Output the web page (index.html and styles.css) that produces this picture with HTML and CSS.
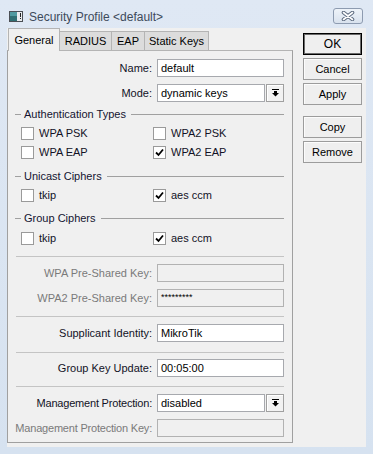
FILE: index.html
```html
<!DOCTYPE html>
<html>
<head>
<meta charset="utf-8">
<link rel="stylesheet" href="styles.css">
</head>
<body>
<div class="window">
  <div class="titlebar">
    <svg class="appicon" width="14" height="11" viewBox="0 0 14 11">
      <rect x="0.5" y="0.5" width="13" height="10" fill="#e9ecef" stroke="#4b4f55"/>
      <rect x="1" y="1" width="7" height="9" fill="#2f6f73"/>
      <rect x="1" y="1" width="7" height="4" fill="#4f9aa0"/>
      <rect x="11" y="2" width="1" height="4" fill="#222"/>
      <rect x="11" y="7" width="1" height="1" fill="#222"/>
    </svg>
    <span class="title">Security Profile &lt;default&gt;</span>
    <div class="close">
      <svg width="14" height="10" viewBox="0 0 14 10">
        <path d="M2.5 1.5 L11.5 8.5 M11.5 1.5 L2.5 8.5" stroke="#5d6b80" stroke-width="3.6" stroke-linecap="round"/>
        <path d="M2.5 1.5 L11.5 8.5 M11.5 1.5 L2.5 8.5" stroke="#ffffff" stroke-width="1.6" stroke-linecap="round"/>
      </svg>
    </div>
  </div>
  <div class="client">
    <div class="left">
      <div class="tabs">
        <div class="tab active w-general">General</div>
        <div class="tab w-radius">RADIUS</div>
        <div class="tab w-eap">EAP</div>
        <div class="tab w-static">Static Keys</div>
      </div>
      <div class="panel">
        <div class="row mt8">
          <div class="label">Name:</div>
          <div class="input">default</div>
        </div>
        <div class="row mt7">
          <div class="label">Mode:</div>
          <div class="input short">dynamic keys</div>
          <div class="ddbtn"><svg width="7" height="8" viewBox="0 0 7 8"><rect x="0" y="0" width="7" height="1" fill="#000"/><rect x="2" y="2" width="3" height="2" fill="#000"/><path d="M0 4 L7 4 L3.5 7.5 Z" fill="#000"/></svg></div>
        </div>

        <div class="group mt6"><span class="dash"></span><span class="gtext">Authentication Types</span><span class="gline"></span></div>
        <div class="checks mt6">
          <div class="chk"><span class="box"></span><span class="ctext">WPA PSK</span></div>
          <div class="chk"><span class="box"></span><span class="ctext">WPA2 PSK</span></div>
        </div>
        <div class="checks mt6">
          <div class="chk"><span class="box"></span><span class="ctext">WPA EAP</span></div>
          <div class="chk"><span class="box"><svg width="11" height="11" viewBox="0 0 11 11"><path d="M2 5.5 L4.5 8 L9 2.5" stroke="#000" stroke-width="1.8" fill="none"/></svg></span><span class="ctext">WPA2 EAP</span></div>
        </div>

        <div class="group mt11"><span class="dash"></span><span class="gtext">Unicast Ciphers</span><span class="gline"></span></div>
        <div class="checks mt6">
          <div class="chk"><span class="box"></span><span class="ctext">tkip</span></div>
          <div class="chk"><span class="box"><svg width="11" height="11" viewBox="0 0 11 11"><path d="M2 5.5 L4.5 8 L9 2.5" stroke="#000" stroke-width="1.8" fill="none"/></svg></span><span class="ctext">aes ccm</span></div>
        </div>

        <div class="group mt10"><span class="dash"></span><span class="gtext">Group Ciphers</span><span class="gline"></span></div>
        <div class="checks mt7">
          <div class="chk"><span class="box"></span><span class="ctext">tkip</span></div>
          <div class="chk"><span class="box"><svg width="11" height="11" viewBox="0 0 11 11"><path d="M2 5.5 L4.5 8 L9 2.5" stroke="#000" stroke-width="1.8" fill="none"/></svg></span><span class="ctext">aes ccm</span></div>
        </div>

        <div class="sep mt11"></div>
        <div class="row mt7">
          <div class="label disabled">WPA Pre-Shared Key:</div>
          <div class="input off"></div>
        </div>
        <div class="row mt7">
          <div class="label disabled">WPA2 Pre-Shared Key:</div>
          <div class="input off"><span class="stars">*********</span></div>
        </div>

        <div class="sep mt9"></div>
        <div class="row mt7">
          <div class="label">Supplicant Identity:</div>
          <div class="input">MikroTik</div>
        </div>

        <div class="sep mt10"></div>
        <div class="row mt6">
          <div class="label">Group Key Update:</div>
          <div class="input">00:05:00</div>
        </div>

        <div class="sep mt9"></div>
        <div class="row mt7">
          <div class="label tight">Management Protection:</div>
          <div class="input short">disabled</div>
          <div class="ddbtn"><svg width="7" height="8" viewBox="0 0 7 8"><rect x="0" y="0" width="7" height="1" fill="#000"/><rect x="2" y="2" width="3" height="2" fill="#000"/><path d="M0 4 L7 4 L3.5 7.5 Z" fill="#000"/></svg></div>
        </div>
        <div class="row mt7">
          <div class="label disabled tight">Management Protection Key:</div>
          <div class="input off"></div>
        </div>
      </div>
    </div>
    <div class="buttons">
      <div class="btn default">OK</div>
      <div class="btn">Cancel</div>
      <div class="btn">Apply</div>
      <div class="btn gap">Copy</div>
      <div class="btn">Remove</div>
    </div>
  </div>
</div>
</body>
</html>
```

FILE: styles.css
```css
* { box-sizing: border-box; }
html, body { margin: 0; padding: 0; }
body {
  font-family: "Liberation Sans", Arial, sans-serif;
  font-size: 11px;
  color: #000;
  background: #d9e4f1;
}
.window {
  width: 373px;
  height: 454px;
  background: linear-gradient(#dfe8f4, #d6e2f0);
  overflow: hidden;
}
.titlebar {
  height: 28px;
  display: flex;
  align-items: flex-start;
  padding-left: 9px;
}
.appicon { margin-top: 11px; flex: none; }
.title {
  margin-left: 6px;
  margin-top: 10px;
  font-size: 12px;
  line-height: 14px;
  color: #3d4a5b;
}
.close {
  margin-left: auto;
  margin-right: 10px;
  margin-top: 8px;
  width: 30px;
  height: 16px;
  border: 1px solid #8d9bb0;
  border-radius: 3px;
  background: linear-gradient(#eef3f9, #d9e2ee);
  display: flex;
  align-items: center;
  justify-content: center;
}
.client {
  margin: 0 7px;
  height: 419px;
  background: #f0f0f0;
  display: flex;
  align-items: flex-start;
}
.left { width: 286px; flex: none; }
.tabs {
  height: 22px;
  display: flex;
  align-items: flex-end;
  padding-left: 1px;
}
.tab {
  height: 19px;
  background: #dcdcdc;
  border-top: 1px solid #b4b4b4;
  border-right: 1px solid #b4b4b4;
  text-align: center;
  line-height: 18px;
  color: #000;
}
.tab.active {
  height: 23px;
  margin-bottom: -1px;
  background: #f0f0f0;
  border-left: 1px solid #b4b4b4;
  position: relative;
  z-index: 1;
  line-height: 22px;
}
.w-general { width: 52px; }
.w-radius { width: 52px; }
.w-eap { width: 33px; }
.w-static { width: 64px; }
.panel {
  height: 393px;
  border: 1px solid #a0a0a0;
  border-top-color: #b4b4b4;
  background: #f0f0f0;
  padding-top: 0;
}
.mt6 { margin-top: 6px; }
.mt7 { margin-top: 7px; }
.mt8 { margin-top: 8px; }
.mt9 { margin-top: 9px; }
.mt10 { margin-top: 10px; }
.mt11 { margin-top: 11px; }
.row {
  display: flex;
  align-items: center;
  height: 18px;
}
.label {
  width: 144px;
  flex: none;
  text-align: right;
  color: #121226;
  white-space: nowrap;
}
.label.tight { letter-spacing: -0.2px; }
.label.disabled { color: #7a7a7a; }
.input {
  margin-left: 5px;
  width: 127px;
  height: 18px;
  border: 1px solid #a7a9ae;
  background: #fff;
  padding-left: 3px;
  line-height: 16px;
  color: #000;
  white-space: nowrap;
  overflow: hidden;
}
.input.short { width: 108px; }
.input.off {
  background: #f0f0f0;
  border-color: #b2b2b2;
}
.stars {
  font-size: 9px;
  line-height: 12px;
  display: block;
  margin-top: 1px;
}
.ddbtn {
  margin-left: 1px;
  width: 18px;
  height: 18px;
  border: 1px solid #a0a0a0;
  background: #f2f2f2;
  box-shadow: inset 1px 1px 0 #fff;
  display: flex;
  align-items: center;
  justify-content: center;
}
.group {
  display: flex;
  align-items: center;
  height: 13px;
  padding-left: 7px;
  padding-right: 8px;
}
.dash {
  width: 6px;
  height: 1px;
  background: #a0a0a0;
  flex: none;
}
.gtext {
  margin-left: 3px;
  color: #141430;
  white-space: nowrap;
  line-height: 13px;
}
.gline {
  flex: 1;
  height: 1px;
  margin-left: 5px;
  background: #a0a0a0;
}
.checks {
  display: flex;
  height: 13px;
  padding-left: 13px;
}
.chk {
  width: 132px;
  display: flex;
  align-items: center;
  height: 13px;
}
.box {
  width: 13px;
  height: 13px;
  border: 1px solid #9a9a9a;
  background: #fff;
  flex: none;
  display: flex;
  align-items: center;
  justify-content: center;
}
.ctext {
  margin-left: 5px;
  color: #121226;
  line-height: 13px;
  white-space: nowrap;
}
.sep {
  height: 1px;
  margin: 0 8px;
  background: #c4c4c4;
}
.sep.mt9 { margin-top: 9px; }
.sep.mt10 { margin-top: 10px; }
.sep.mt11 { margin-top: 11px; }
.buttons {
  margin-left: 10px;
  margin-top: 5px;
  width: 59px;
  display: flex;
  flex-direction: column;
  gap: 3px;
}
.btn {
  height: 22px;
  border: 1px solid #9c9c9c;
  background: #efefef;
  box-shadow: inset 1px 1px 0 #fcfcfc;
  text-align: center;
  line-height: 20px;
  color: #000;
}
.btn.default {
  border: 1px solid #000;
  box-shadow: inset 0 0 0 1px #6a6a6a;
  font-size: 12px;
}
.btn.gap { margin-top: 8px; }
```
